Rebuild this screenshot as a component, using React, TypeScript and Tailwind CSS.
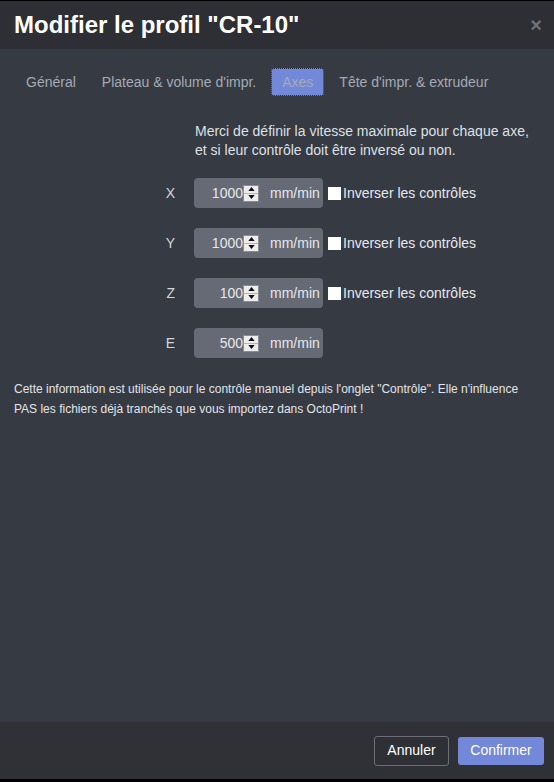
import React from "react";

const tabs = ["Général", "Plateau & volume d'impr.", "Axes", "Tête d'impr. & extrudeur"];

const axes = [
  { name: "X", speed: "1000", invert: true },
  { name: "Y", speed: "1000", invert: true },
  { name: "Z", speed: "100", invert: true },
  { name: "E", speed: "500", invert: false },
];

function Spinner() {
  return (
    <span className="flex h-[17px] w-[16px] flex-col border border-[#8a8d93] bg-[#ececec]">
      <span className="flex flex-1 items-center justify-center border-b border-[#b5b5b5]">
        <svg viewBox="0 0 8 5" className="h-[4px] w-[7px]" aria-hidden="true">
          <path d="M0 5 4 0 8 5Z" fill="#111" />
        </svg>
      </span>
      <span className="flex flex-1 items-center justify-center">
        <svg viewBox="0 0 8 5" className="h-[4px] w-[7px]" aria-hidden="true">
          <path d="M0 0h8L4 5Z" fill="#111" />
        </svg>
      </span>
    </span>
  );
}

function AxisRow({ name, speed, invert }: { name: string; speed: string; invert: boolean }) {
  return (
    <div className="flex h-[30px] items-center">
      <div className="w-[175px] text-right text-[14px] text-[#d4d7dc]">{name}</div>
      <div className="ml-[19px] flex h-[30px] w-[129px] items-center rounded-[4px] bg-[#656a75]">
        <span className="w-[49px] text-right text-[14px] text-[#e6e8ec]">{speed}</span>
        <Spinner />
        <span className="ml-[11px] text-[14px] text-[#e6e8ec]">mm/min</span>
      </div>
      {invert && (
        <label className="ml-[5px] flex items-center text-[14px] text-[#e6e8ec]">
          <span className="h-[13px] w-[13px] bg-white" />
          <span className="ml-[2px]">Inverser les contrôles</span>
        </label>
      )}
    </div>
  );
}

export default function App() {
  return (
    <div
      className="flex h-[782px] w-[554px] flex-col bg-black pb-[3px] pt-px"
      style={{ fontFamily: '"Liberation Sans", Arial, sans-serif' }}
    >
      <header className="flex h-[48px] items-center justify-between bg-[#2d2f34] pl-[14px] pr-[12px]">
        <h1 className="text-[24px] font-bold leading-none text-white">Modifier le profil "CR-10"</h1>
        <span className="text-[20px] font-bold leading-none text-[#6f7278]">×</span>
      </header>

      <main className="flex-1 bg-[#363a43] pt-[19px]">
        <nav className="flex gap-[4px] pl-[15px]">
          {tabs.map((t) =>
            t === "Axes" ? (
              <span
                key={t}
                className="flex h-[28px] items-center rounded-[3px] border border-dotted border-[#1c2340] bg-[#7388d9] px-[10px] text-[14px] text-[#a4aab8]"
              >
                {t}
              </span>
            ) : (
              <span key={t} className="flex h-[28px] items-center px-[11px] text-[14px] text-[#a4aab4]">
                {t}
              </span>
            )
          )}
        </nav>

        <p className="ml-[195px] mt-[26px] text-[14px] leading-[19px] text-[#dde0e5]">
          Merci de définir la vitesse maximale pour chaque axe,
          <br />
          et si leur contrôle doit être inversé ou non.
        </p>

        <div className="mt-[18px] flex flex-col gap-[20px]">
          {axes.map((a) => (
            <AxisRow key={a.name} {...a} />
          ))}
        </div>

        <p className="mt-[21px] px-[14px] text-[12px] leading-[20px] text-[#e2e4e8]">
          Cette information est utilisée pour le contrôle manuel depuis l'onglet "Contrôle". Elle n'influence PAS les
          fichiers déjà tranchés que vous importez dans OctoPrint !
        </p>
      </main>

      <footer className="flex h-[57px] items-center justify-end gap-[9px] bg-[#2f3136] pr-[10px]">
        <button
          type="button"
          className="h-[30px] w-[75px] rounded-[3px] border border-[#6b6e74] bg-[#2e3035] text-[14px] text-white"
        >
          Annuler
        </button>
        <button type="button" className="h-[28px] w-[86px] rounded-[3px] bg-[#7388d9] text-[14px] text-white">
          Confirmer
        </button>
      </footer>
    </div>
  );
}
